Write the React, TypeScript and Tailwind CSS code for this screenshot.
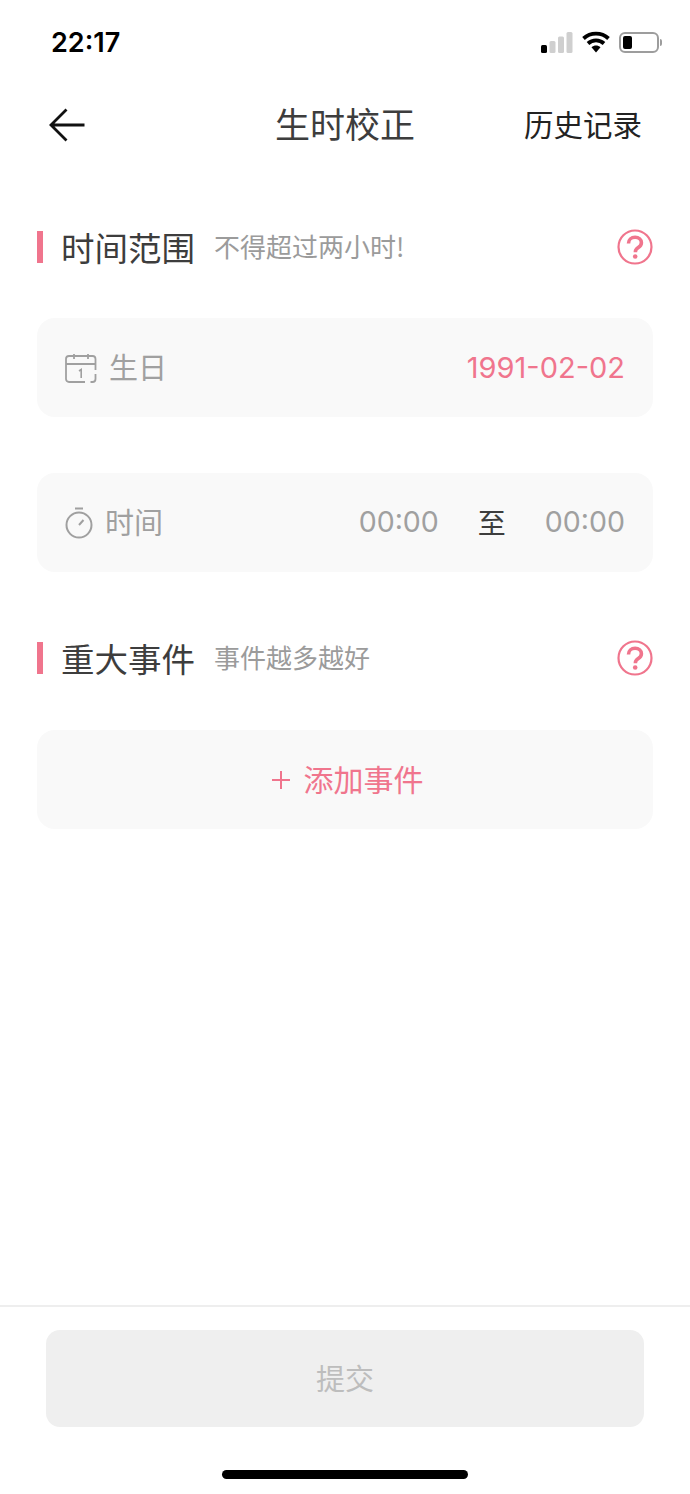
import React from 'react';

const SectionHeading: React.FC<{ title: string; hint: string }> = ({ title, hint }) => (
    <div className="flex h-8 items-center">
        <div className="h-8 w-[6px] bg-[#f0758d]" />
        <h2 className="ml-[18px] text-[33.500px] leading-8 font-normal text-[#3d3d3d]">{title}</h2>
        <span className="ml-[19px] -translate-y-px text-[26px] leading-8 text-[#9b9b9b]">{hint}</span>
        <svg className="ml-auto h-9 w-9" viewBox="0 0 36 36" fill="none">
            <circle cx="18" cy="18" r="16.5" stroke="#f0758d" strokeWidth="2.2" />
            <path d="M11.500 14.500c0-3.600 2.800-6.200 6.600-6.200 3.700 0 6.300 2.300 6.300 5.400 0 2.400-1.300 3.700-3.100 4.900-1.800 1.200-2.900 2.100-2.900 4.100v.6" stroke="#f0758d" strokeWidth="3.600" />
            <circle cx="18.200" cy="27.500" r="2.300" fill="#f0758d" />
        </svg>
    </div>
);

const App: React.FC = () => {
    return (
        <div className="flex h-[1494px] w-[690px] flex-col overflow-hidden bg-white font-['Noto_Sans_CJK_SC','Noto_Sans',sans-serif]">
            {/* status bar */}
            <div className="flex h-[84px] items-center justify-between pr-[28px] pl-[51px]">
                <span className="translate-y-px font-['Inter',sans-serif] text-[27px] font-semibold text-black">22:17</span>
                <div className="flex items-center">
                    <svg className="h-[21px] w-[32px]" viewBox="0 0 32 21">
                        <rect x="0" y="13" width="6" height="8" rx="1.500" fill="#000" />
                        <rect x="8.500" y="9" width="6" height="12" rx="1.500" fill="#cfcfcf" />
                        <rect x="17" y="4.500" width="6" height="16.500" rx="1.500" fill="#cfcfcf" />
                        <rect x="25.500" y="0" width="6" height="21" rx="1.500" fill="#cfcfcf" />
                    </svg>
                    <svg className="ml-[9px] h-[22px] w-[28px]" viewBox="0 0 28 22" fill="none">
                        <path d="M1.500 7.500C8.500 1 19.500 1 26.500 7.500" stroke="#000" strokeWidth="3.800" />
                        <path d="M6 12.500C10.500 8.300 17.500 8.300 22 12.500" stroke="#000" strokeWidth="3.800" />
                        <path d="M9.500 16.200L14 21.500L18.500 16.200C16 13.800 12 13.800 9.500 16.200Z" fill="#000" />
                    </svg>
                    <div className="ml-[9px] flex items-center">
                        <div className="flex h-[21px] w-[40px] items-center rounded-[6px] border-2 border-[#9d9d9d] p-[2px]">
                            <div className="h-[13px] w-[9px] rounded-[2px] bg-black" />
                        </div>
                        <div className="ml-[1px] h-[7px] w-[2px] rounded-r-sm bg-[#9d9d9d]" />
                    </div>
                </div>
            </div>

            {/* nav */}
            <div className="relative flex h-[82px] items-center justify-between pr-[48px] pl-[49px]">
                <svg className="h-[34px] w-[36px]" viewBox="0 0 36 34" fill="none" stroke="#111" strokeWidth="2.800">
                    <path d="M17.500 1.500L2 17l15.500 15.500M2 17h33.500" />
                </svg>
                <h1 className="absolute left-0 w-full -translate-y-0.5 text-center text-[35px] leading-[44px] font-normal text-[#3d3d3d]">生时校正</h1>
                <button className="-translate-y-0.5 text-[29.500px] leading-[40px] text-[#222]">历史记录</button>
            </div>

            <div className="flex flex-1 flex-col px-[37px] pt-[65px]">
                <SectionHeading title="时间范围" hint="不得超过两小时!" />

                <div className="mt-[55px] flex h-[99px] items-center rounded-[18px] bg-[#f9f9f9] px-[28px]">
                    <svg className="h-[30px] w-[32px]" viewBox="0 0 32 30" fill="none" stroke="#a0a0a0" strokeWidth="1.800">
                        <path d="M30.500 21v5a3 3 0 0 1-3 3h-2M20 29H4a3 3 0 0 1-3-3V6a3 3 0 0 1 3-3h23.500a3 3 0 0 1 3 3v11M1 11h29.500M9 1v5M23 1v5" />
                        <path d="M14 18l2.200-1.500V25" strokeWidth="1.600" />
                    </svg>
                    <span className="ml-[12px] -translate-y-px text-[29px] text-[#a0a0a0]">生日</span>
                    <span className="ml-auto font-['Inter',sans-serif] text-[29px] text-[#f0758d]">1991-02-02</span>
                </div>

                <div className="mt-[56px] flex h-[99px] items-center rounded-[18px] bg-[#f9f9f9] px-[28px]">
                    <svg className="h-[32px] w-[28px]" viewBox="0 0 28 32" fill="none" stroke="#a0a0a0" strokeWidth="2">
                        <circle cx="14" cy="18" r="12.500" />
                        <path d="M10 1.500h8M14 18l4.500-5" />
                    </svg>
                    <span className="ml-[12px] -translate-y-px text-[29px] text-[#a0a0a0]">时间</span>
                    <span className="ml-auto font-['Inter',sans-serif] text-[28.500px] text-[#a0a0a0]">00:00</span>
                    <span className="mx-[39px] -translate-y-px text-[28px] text-[#3d3d3d]">至</span>
                    <span className="font-['Inter',sans-serif] text-[28.500px] text-[#a0a0a0]">00:00</span>
                </div>

                <div className="mt-[70px]">
                    <SectionHeading title="重大事件" hint="事件越多越好" />
                </div>

                <button className="mt-[56px] flex h-[99px] items-center justify-center rounded-[18px] bg-[#f9f9f9] pl-[5px] text-[30px] text-[#f0758d]">
                    <svg className="mr-[14px] h-[18px] w-[18px]" viewBox="0 0 18 18" stroke="#f0758d" strokeWidth="2">
                        <path d="M9 0v18M0 9h18" />
                    </svg>
                    <span className="-translate-y-px">添加事件</span>
                </button>
            </div>

            {/* footer */}
            <div className="flex h-[189px] flex-col items-center border-t-2 border-[#eeeeee] px-[46px] pt-[23px]">
                <button className="h-[97px] w-full rounded-[14px] bg-[#efefef] pb-0.5 text-[29px] text-[#bdbdbd]">提交</button>
                <div className="mt-[43px] h-[9px] w-[246px] rounded-full bg-black" />
            </div>
        </div>
    );
};

export default App;
